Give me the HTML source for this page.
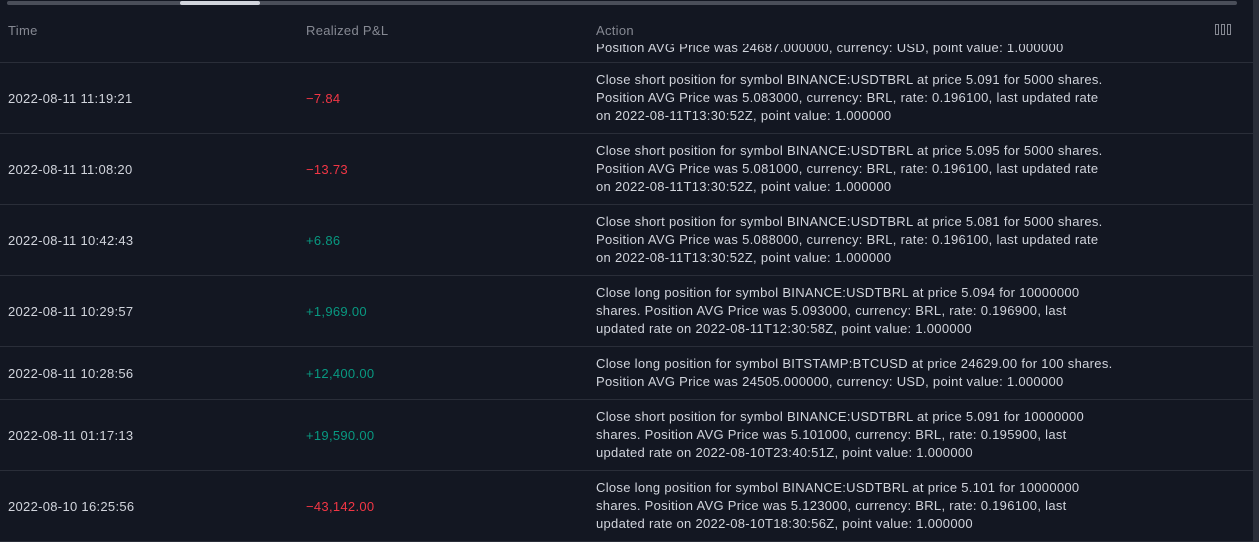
<!DOCTYPE html>
<html><head><meta charset="utf-8"><style>
*{margin:0;padding:0;box-sizing:border-box}
body{width:1259px;height:542px;background:#131722;overflow:hidden;position:relative;font-family:"Liberation Sans",sans-serif;font-size:13px;color:#d1d4dc;letter-spacing:0.3px}
.abs{position:absolute}
.track{left:7px;top:1px;width:1230px;height:4px;background:#4a4e59;border-radius:2px}
.thumb{left:180px;top:1px;width:80px;height:4px;background:#d1d4dc;border-radius:2px}
.vbar{left:1253px;top:0;width:6px;height:542px;background:#2a2e39}
.hd{top:22px;color:#868993;font-size:13px;line-height:18px}
.row{position:absolute;left:0;width:1253px;border-bottom:1px solid #2a2e39}
.t{position:absolute;left:8px;line-height:18px}
.p{position:absolute;left:306px;line-height:18px}
.a{position:absolute;left:596px;top:9px;line-height:18px;white-space:nowrap}
.r{color:#f23645}.g{color:#089981}
.clip{position:absolute;left:0;top:44px;width:1253px;height:19px;overflow:hidden;border-bottom:1px solid #2a2e39}
</style></head><body>
<div class="abs track"></div><div class="abs thumb"></div>
<div class="abs vbar"></div>
<div class="abs hd" style="left:8px">Time</div>
<div class="abs hd" style="left:306px">Realized P&amp;L</div>
<div class="abs hd" style="left:596px">Action</div>
<svg class="abs" style="left:1214px;top:23px" width="18" height="13" viewBox="0 0 18 13"><g fill="none" stroke="#868993" stroke-width="1"><rect x="1.5" y="1.5" width="3" height="10"/><rect x="7.5" y="1.5" width="3" height="10"/><rect x="13.5" y="1.5" width="3" height="10"/></g></svg>
<div class="clip"><div class="a" style="top:-5px">Position AVG Price was 24687.000000, currency: USD, point value: 1.000000</div></div>

<div class="row" style="top:62px;height:72px"><div class="t" style="top:28px">2022-08-11 11:19:21</div><div class="p r" style="top:28px">−7.84</div><div class="a">Close short position for symbol BINANCE:USDTBRL at price 5.091 for 5000 shares.<br>Position AVG Price was 5.083000, currency: BRL, rate: 0.196100, last updated rate<br>on 2022-08-11T13:30:52Z, point value: 1.000000</div></div>
<div class="row" style="top:133px;height:72px"><div class="t" style="top:28px">2022-08-11 11:08:20</div><div class="p r" style="top:28px">−13.73</div><div class="a">Close short position for symbol BINANCE:USDTBRL at price 5.095 for 5000 shares.<br>Position AVG Price was 5.081000, currency: BRL, rate: 0.196100, last updated rate<br>on 2022-08-11T13:30:52Z, point value: 1.000000</div></div>
<div class="row" style="top:204px;height:72px"><div class="t" style="top:28px">2022-08-11 10:42:43</div><div class="p g" style="top:28px">+6.86</div><div class="a">Close short position for symbol BINANCE:USDTBRL at price 5.081 for 5000 shares.<br>Position AVG Price was 5.088000, currency: BRL, rate: 0.196100, last updated rate<br>on 2022-08-11T13:30:52Z, point value: 1.000000</div></div>
<div class="row" style="top:275px;height:72px"><div class="t" style="top:28px">2022-08-11 10:29:57</div><div class="p g" style="top:28px">+1,969.00</div><div class="a">Close long position for symbol BINANCE:USDTBRL at price 5.094 for 10000000<br>shares. Position AVG Price was 5.093000, currency: BRL, rate: 0.196900, last<br>updated rate on 2022-08-11T12:30:58Z, point value: 1.000000</div></div>
<div class="row" style="top:346px;height:54px"><div class="t" style="top:19px">2022-08-11 10:28:56</div><div class="p g" style="top:19px">+12,400.00</div><div class="a">Close long position for symbol BITSTAMP:BTCUSD at price 24629.00 for 100 shares.<br>Position AVG Price was 24505.000000, currency: USD, point value: 1.000000</div></div>
<div class="row" style="top:399px;height:72px"><div class="t" style="top:28px">2022-08-11 01:17:13</div><div class="p g" style="top:28px">+19,590.00</div><div class="a">Close short position for symbol BINANCE:USDTBRL at price 5.091 for 10000000<br>shares. Position AVG Price was 5.101000, currency: BRL, rate: 0.195900, last<br>updated rate on 2022-08-10T23:40:51Z, point value: 1.000000</div></div>
<div class="row" style="top:470px;height:72px"><div class="t" style="top:28px">2022-08-10 16:25:56</div><div class="p r" style="top:28px">−43,142.00</div><div class="a">Close long position for symbol BINANCE:USDTBRL at price 5.101 for 10000000<br>shares. Position AVG Price was 5.123000, currency: BRL, rate: 0.196100, last<br>updated rate on 2022-08-10T18:30:56Z, point value: 1.000000</div></div>
</body></html>
